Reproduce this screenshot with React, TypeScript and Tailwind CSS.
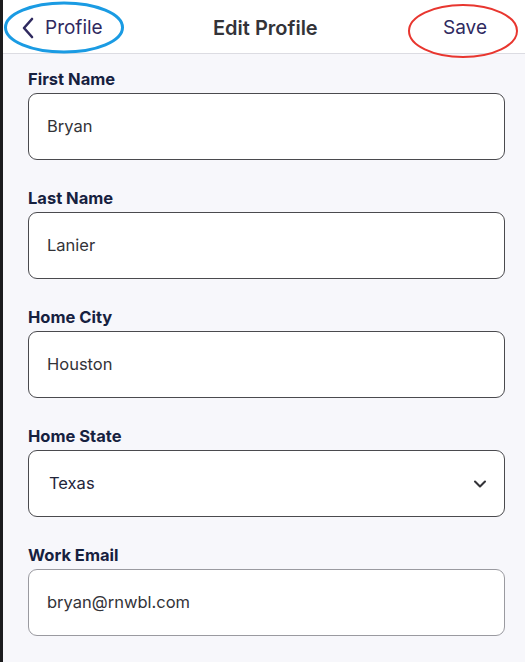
import { ChevronDown } from "lucide-react";

const fields = [
  { label: "First Name", value: "Bryan" },
  { label: "Last Name", value: "Lanier" },
  { label: "Home City", value: "Houston" },
  { label: "Home State", value: "Texas", select: true },
  { label: "Work Email", value: "bryan@rnwbl.com", light: true },
];

export default function App() {
  return (
    <div
      className="relative w-[525px] h-[662px] overflow-hidden bg-[#f7f7fb] border-l-[3px] border-[#1c1c1e]"
      style={{ fontFamily: "Inter, 'Noto Sans', sans-serif" }}
    >
      {/* header */}
      <div className="relative h-[54px] pt-[2px] bg-white border-b border-[#dcdce2] flex items-center justify-between pl-[18px] pr-[38px]">
        <div className="flex items-center gap-[10px] text-[#2f2a5f]">
          <svg width="14" height="22" viewBox="0 0 14 22" fill="none">
            <path d="M11 2 L3 11 L11 20" stroke="currentColor" strokeWidth="2.6" strokeLinecap="round" strokeLinejoin="round" />
          </svg>
          <span className="text-[19px] leading-none">Profile</span>
        </div>
        <span className="absolute left-[210px] text-[20px] font-semibold text-[#333338] leading-none">Edit Profile</span>
        <span className="text-[19px] text-[#2f2a5f] leading-none">Save</span>
      </div>

      {/* form */}
      <div className="flex flex-col gap-[28px] pt-[15px] pl-[25px] pr-[20px]">
        {fields.map((f) => (
          <div key={f.label} className="flex flex-col gap-1">
            <span className="text-[16.5px] leading-5 font-bold text-[#16213f]">{f.label}</span>
            <div
              className={`h-[67px] rounded-[9px] bg-white border-[1.5px] flex items-center justify-between ${f.light ? "border-[#9a9aa0]" : "border-[#4a4a4e]"} ${f.select ? "pl-[20px] pr-[14px]" : "pl-[18px] pr-4"}`}
            >
              <span className={`text-[16.5px] ${f.select ? "text-[#22253a]" : "text-[#333338]"}`}>{f.value}</span>
              {f.select && <ChevronDown size={20} strokeWidth={2.5} className="text-[#333338]" />}
            </div>
          </div>
        ))}
      </div>

      {/* annotation marks */}
      <svg className="absolute left-0 top-0 pointer-events-none" width="525" height="70" viewBox="0 0 525 70">
        <ellipse cx="61" cy="27.5" rx="58.5" ry="24.5" fill="none" stroke="#1a9be3" strokeWidth="3" />
        <ellipse cx="460" cy="31" rx="54" ry="26" fill="none" stroke="#e8362f" strokeWidth="2" />
      </svg>
    </div>
  );
}
